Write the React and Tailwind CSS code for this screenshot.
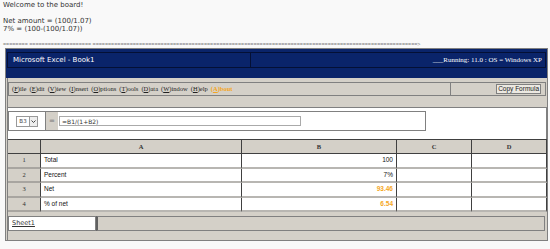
import React from "react";

const menu = ["F|ile", "E|dit", "V|iew", "I|nsert", "O|ptions", "T|ools", "D|ata", "W|indow", "H|elp"];

const rows = [
  { n: 1, label: "Total", value: "100", hot: false },
  { n: 2, label: "Percent", value: "7%", hot: false },
  { n: 3, label: "Net", value: "93.46", hot: true },
  { n: 4, label: "% of net", value: "6.54", hot: true },
];

const rule = "========" + " " + "=".repeat(20) + " " + "=".repeat(105) + ">";

function MenuItem({ item }) {
  const [key, rest] = item.split("|");
  return (
    <span className="mr-[3px]">
      (<span className="underline">{key}</span>){rest}
    </span>
  );
}

function App() {
  return (
    <div className="min-h-screen bg-[#f9f9f9] font-['DejaVu_Sans',sans-serif]">
      {/* intro text */}
      <div className="px-[3px] pt-[1px] text-[7px] leading-[8px] text-[#333]">
        <p>Welcome to the board!</p>
        <p>&nbsp;</p>
        <p>Net amount = (100/1.07)</p>
        <p>7% = (100-(100/1.07))</p>
        <p>&nbsp;</p>
        <p className="h-[7px] whitespace-nowrap font-['Liberation_Sans',sans-serif] text-[5.3px] leading-[7px] text-[#777]">{rule}</p>
      </div>

      {/* window */}
      <div className="ml-[5px] w-[543px] border border-[#808080] bg-[#d4d0c8]">
        {/* title bar */}
        <div className="h-[29px] bg-[#0a246a] px-px pt-[3px]">
          <div className="flex h-[16px] border border-[#041035] text-white">
            <div className="flex w-[243px] items-center border-r border-[#041035] pl-[5px] text-[7px]">
              Microsoft Excel - Book1
            </div>
            <div className="flex flex-1 items-center justify-end pr-[3px] font-['Liberation_Serif',serif] text-[7px]">
              ___Running: 11.0 : OS = Windows XP
            </div>
          </div>
        </div>

        <div className="border-l border-[#808080] ml-px">
          {/* menu bar */}
          <div className="h-[29px] pt-[4px] pr-px">
            <div className="flex h-[14px] border border-[#808080]">
              <div className="flex w-[442px] items-center border-r border-[#808080] pl-[3px] font-['Liberation_Serif',serif] text-[6.5px] text-[#222]">
                {menu.map((m) => (
                  <MenuItem key={m} item={m} />
                ))}
                <span className="font-bold text-[#f5a623]">
                  (<span className="underline">A</span>)bout
                </span>
              </div>
              <div className="flex flex-1 items-center justify-end pr-[4px]">
                <button className="h-[10px] border border-[#808080] bg-[#ece9e2] px-px font-['Liberation_Sans',sans-serif] text-[6.5px] leading-[8px] text-[#222]">
                  Copy Formula
                </button>
              </div>
            </div>
          </div>

          {/* formula bar */}
          <div className="h-[32px] border-t border-[#808080] border-r bg-white pt-[3px]">
            <div className="flex h-[20px] w-[418px] border border-[#808080]">
              <div className="flex w-[37px] items-center justify-center border-r border-[#808080]">
                <div className="flex h-[11px] items-center border border-[#999]">
                  <span className="px-[2px] text-[5.5px] text-[#444]">B3</span>
                  <span className="flex h-full w-[8px] items-center justify-center border-l border-[#999] bg-[#eee]">
                    <svg width="5" height="3" viewBox="0 0 5 3">
                      <path d="M0.5 0.5 L2.5 2.5 L4.5 0.5" stroke="#333" strokeWidth="0.9" fill="none" />
                    </svg>
                  </span>
                </div>
              </div>
              <div className="flex w-[12px] items-center justify-center bg-[#d4d0c8] text-[7px] text-[#777]">=</div>
              <div className="flex items-center pl-px">
                <div className="flex h-[10px] w-[242px] items-center border border-[#aaa] pl-[2px] text-[6px] text-[#333]">
                  =B1/(1+B2)
                </div>
              </div>
            </div>
          </div>

          {/* grid */}
          <div className="grid grid-cols-[33px_201px_155px_75px_75px] border-t border-[#404040] text-[6.5px]">
            <div className="h-[14px] border-r border-b border-[#404040]" />
            {["A", "B", "C", "D"].map((c) => (
              <div
                key={c}
                className="flex h-[14px] items-center justify-center border-r border-b border-[#404040] font-['Liberation_Serif',serif] font-bold text-[#333]"
              >
                {c}
              </div>
            ))}
            {rows.map((r) => (
              <React.Fragment key={r.n}>
                <div className="flex h-[14.5px] items-center justify-center border-r border-b-2 border-r-[#404040] border-b-[#a8a5a0] bg-[#d4d0c8] font-['Liberation_Serif',serif] text-[#333]">
                  {r.n}
                </div>
                <div className="flex h-[14.5px] items-center border-r border-b-2 border-r-[#404040] border-b-[#b8b6b2] bg-white pl-[3px] font-['Liberation_Sans',sans-serif] text-[#111]">
                  {r.label}
                </div>
                <div
                  className={
                    "flex h-[14.5px] items-center justify-end border-r border-b-2 border-r-[#404040] border-b-[#b8b6b2] bg-white pr-[3px] font-['Liberation_Sans',sans-serif] " +
                    (r.hot ? "font-bold text-[#f5a623]" : "text-[#111]")
                  }
                >
                  {r.value}
                </div>
                <div className="h-[14.5px] border-r border-b-2 border-r-[#404040] border-b-[#b8b6b2] bg-white" />
                <div className="h-[14.5px] border-r border-b-2 border-r-[#404040] border-b-[#b8b6b2] bg-white" />
              </React.Fragment>
            ))}
          </div>

          {/* sheet tabs */}
          <div className="flex h-[28px] items-start pt-[4px] pr-[2px]">
            <div className="flex h-[15px] w-[88px] items-center border border-[#808080] bg-white pl-[3px] text-[6.5px] text-[#333] underline">
              Sheet1
            </div>
            <div className="h-[15px] flex-1 border-y border-r border-[#808080] border-l-2 border-l-[#606060] bg-[#d4d0c8]" />
          </div>
        </div>
      </div>
    </div>
  );
}

export default App;
